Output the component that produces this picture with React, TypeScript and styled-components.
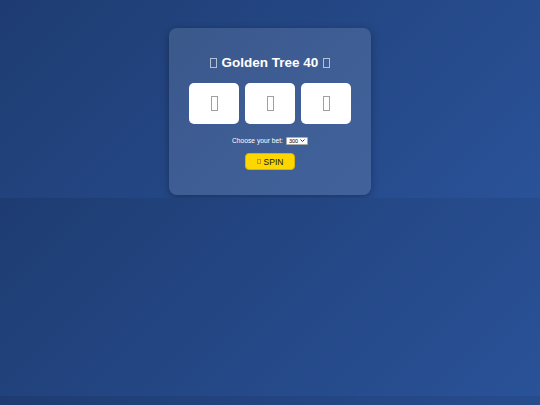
import React, { useState } from "react";
import styled, { createGlobalStyle } from "styled-components";

const GlobalStyle = createGlobalStyle`
  html {
    background: linear-gradient(135deg, #1e3c72, #2a5298);
  }
  body {
    margin: 0;
    padding: 28px 0 3px;
    font-family: "Liberation Sans", Arial, sans-serif;
    color: #fff;
    text-align: center;
    background: transparent;
  }
`;

const Card = styled.div`
  width: 202px;
  box-sizing: border-box;
  margin: 0 auto;
  padding: 27px 20px 25px;
  background: rgba(255, 255, 255, 0.12);
  border-radius: 8px;
  box-shadow: 0 2px 8px rgba(0, 0, 0, 0.3);
`;

const Title = styled.h1`
  margin: 0 0 13px;
  display: flex;
  align-items: center;
  justify-content: center;
  gap: 5px;
  font-size: 13.5px;
  line-height: 15px;
  font-weight: bold;
`;

/* missing-glyph box, as the emoji show up in the reference */
const Tofu = styled.span<{ $w: number; $h: number; $c: string }>`
  display: inline-block;
  box-sizing: border-box;
  width: ${(p) => p.$w}px;
  height: ${(p) => p.$h}px;
  border: 1px solid ${(p) => p.$c};
`;

const Reels = styled.div`
  display: flex;
  justify-content: center;
  gap: 6px;
`;

const Reel = styled.div`
  width: 50px;
  height: 41px;
  background: #fff;
  border-radius: 5px;
  display: flex;
  align-items: center;
  justify-content: center;
`;

const BetRow = styled.div`
  margin-top: 12px;
  display: flex;
  align-items: center;
  justify-content: center;
  gap: 3px;
  font-size: 6.7px;
  height: 9px;
`;

const SelectWrap = styled.span`
  position: relative;
  display: inline-block;
`;

const BetSelect = styled.select`
  appearance: none;
  font-family: "Liberation Sans", Arial, sans-serif;
  font-size: 5.5px;
  width: 22px;
  height: 8px;
  padding: 0 0 0 2px;
  border: 1px solid #aaa;
  border-radius: 1px;
  background: #fff;
  color: #000;
  display: block;
`;

const Chevron = styled.svg`
  position: absolute;
  right: 3px;
  top: 2.5px;
  width: 5px;
  height: 3px;
  pointer-events: none;
`;

const SpinButton = styled.button`
  margin-top: 8px;
  width: 50px;
  height: 17px;
  padding: 0;
  display: inline-flex;
  align-items: center;
  justify-content: center;
  gap: 3px;
  background: #ffd700;
  border: 1px solid #d9b400;
  border-radius: 4px;
  font-family: "Liberation Sans", Arial, sans-serif;
  font-size: 8.5px;
  color: #111;
  cursor: pointer;
`;

const reels = [0, 1, 2];

export default function App() {
  const [bet, setBet] = useState("300");
  return (
    <>
      <GlobalStyle />
      <Card>
        <Title>
          <Tofu $w={7} $h={10} $c="#b4c0d6" />
          <span>Golden Tree 40</span>
          <Tofu $w={7} $h={10} $c="#b4c0d6" />
        </Title>
        <Reels>
          {reels.map((i) => (
            <Reel key={i}>
              <Tofu $w={7} $h={15} $c="#a0a0a0" />
            </Reel>
          ))}
        </Reels>
        <BetRow>
          <span>Choose your bet:</span>
          <SelectWrap>
            <BetSelect value={bet} onChange={(e) => setBet(e.target.value)}>
              <option value="100">100</option>
              <option value="200">200</option>
              <option value="300">300</option>
              <option value="500">500</option>
            </BetSelect>
            <Chevron viewBox="0 0 5 3">
              <path d="M0.5 0.5 L2.5 2.5 L4.5 0.5" fill="none" stroke="#333" strokeWidth="1" />
            </Chevron>
          </SelectWrap>
        </BetRow>
        <SpinButton>
          <Tofu $w={4} $h={5} $c="#b59a20" />
          <span>SPIN</span>
        </SpinButton>
      </Card>
    </>
  );
}
